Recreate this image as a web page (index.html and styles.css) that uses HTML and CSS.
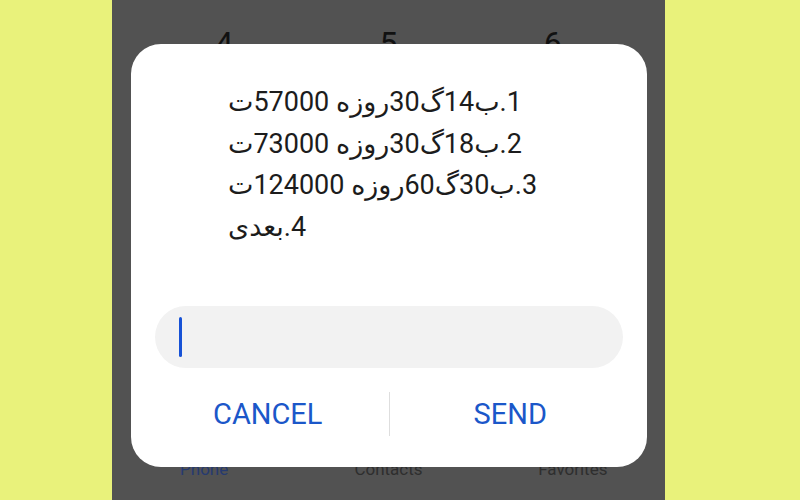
FILE: index.html
```html
<!DOCTYPE html>
<html lang="fa">
<head>
<meta charset="utf-8">
<title>USSD</title>
<link rel="stylesheet" href="styles.css">
</head>
<body>
<div class="stage">
  <div class="phone">
    <div class="keypad-row">
      <span class="key">4</span>
      <span class="key">5</span>
      <span class="key">6</span>
    </div>
    <nav class="tabs">
      <span class="tab tab-active">Phone</span>
      <span class="tab">Contacts</span>
      <span class="tab">Favorites</span>
    </nav>
    <div class="dialog">
      <div class="message">
        <div class="line" dir="rtl">1.ب14گ30روزه 57000ت</div>
        <div class="line" dir="rtl">2.ب18گ30روزه 73000ت</div>
        <div class="line" dir="rtl">3.ب30گ60روزه 124000ت</div>
        <div class="line" dir="rtl">4.بعدی</div>
      </div>
      <div class="input"><span class="caret"></span></div>
      <div class="actions">
        <button class="btn">CANCEL</button>
        <span class="divider"></span>
        <button class="btn">SEND</button>
      </div>
    </div>
  </div>
</div>
</body>
</html>
```
FILE: styles.css
```css
html, body {
  margin: 0;
  padding: 0;
}
body {
  background: #e9f27b;
  width: 800px;
  height: 500px;
  overflow: hidden;
  font-family: Roboto, "DejaVu Sans", sans-serif;
}
.stage {
  display: flex;
  height: 500px;
  padding-left: 112px;
}
.phone {
  position: relative;
  width: 553px;
  height: 500px;
  background: #525252;
  display: flex;
  flex-direction: column;
  overflow: hidden;
}
.keypad-row {
  display: flex;
  padding: 27px 30px 0;
}
.key {
  flex: 1;
  text-align: center;
  font-size: 32px;
  line-height: 1;
  color: #111;
}
.tabs {
  margin-top: auto;
  display: flex;
  padding-bottom: 21px;
}
.tab {
  flex: 1;
  text-align: center;
  font-size: 17px;
  line-height: 20px;
  color: #2e2e2e;
}
.tab-active {
  color: #263a70;
}
.dialog {
  position: absolute;
  left: 19px;
  top: 44px;
  width: 516px;
  height: 423px;
  box-sizing: border-box;
  background: #fff;
  border-radius: 30px;
  padding: 38px 24px 0;
  display: flex;
  flex-direction: column;
}
.message {
  padding-left: 73px;
  color: #1c1c1c;
  font-size: 27px;
  line-height: 41.5px;
}
.line {
  text-align: left;
  height: 41.5px;
  white-space: nowrap;
}
.input {
  margin-top: 58px;
  height: 62px;
  border-radius: 31px;
  background: #f2f2f2;
  display: flex;
  align-items: center;
  padding-left: 24px;
}
.caret {
  width: 3px;
  height: 40px;
  border-radius: 2px;
  background: #1752d6;
}
.actions {
  margin: 18px -8px 0;
  height: 56px;
  display: flex;
  align-items: center;
}
.btn {
  flex: 1;
  border: 0;
  background: transparent;
  font-family: Roboto, "DejaVu Sans", sans-serif;
  font-size: 29px;
  color: #1b57c9;
  padding: 0;
  height: 56px;
}
.divider {
  width: 1px;
  height: 44px;
  background: #dedede;
}
```
